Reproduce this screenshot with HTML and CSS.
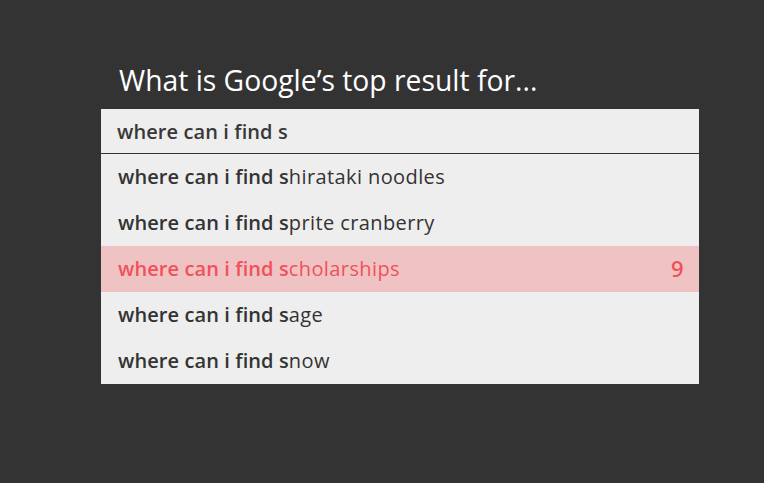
FILE: index.html
```html
<!DOCTYPE html>
<html lang="en">
<head>
	<meta charset="utf-8">
	<title>Google Feud</title>
	<link rel="stylesheet" href="styles.css">
</head>
<body>
	<div class="feud">
		<h1 class="question">What is Google’s top result for...</h1>
		<div class="board">
			<div class="query">where can i find s</div>
			<ul class="answers">
				<li><span><b>where can i find s</b>hirataki noodles</span></li>
				<li><span><b>where can i find s</b>prite cranberry</span></li>
				<li class="found"><span><b>where can i find s</b>cholarships</span><em>9</em></li>
				<li><span><b>where can i find s</b>age</span></li>
				<li><span><b>where can i find s</b>now</span></li>
			</ul>
		</div>
	</div>
</body>
</html>
```

FILE: styles.css
```css
*{
	margin:0;
	padding:0;
}
body{
	background:#333;
	font-family:"Open Sans","Liberation Sans",sans-serif;
	color:#333;
}
.feud{
	width:598px;
	margin:0 auto;
	padding-top:60px;
	position:relative;
	left:18px;
}
.question{
	color:#fff;
	font-size:28.3px;
	font-weight:400;
	line-height:40px;
	padding-left:18px;
	margin-bottom:9px;
}
.board{
	background:#eee;
}
.query{
	height:44px;
	line-height:46px;
	padding-left:16px;
	font-size:20px;
	font-weight:600;
	letter-spacing:0.1px;
	color:#383838;
	border-bottom:1px solid #333;
}
.answers{
	list-style:none;
}
.answers li{
	display:flex;
	justify-content:space-between;
	height:46px;
	line-height:45px;
	padding:0 15px 0 17px;
	font-size:20px;
	letter-spacing:0.4px;
}
.answers li b{
	font-weight:600;
	letter-spacing:0.1px;
}
.answers li.found{
	background:#efc3c3;
	color:#f0525a;
}
.answers li em{
	font-style:normal;
	font-weight:600;
	font-size:22px;
}
```
